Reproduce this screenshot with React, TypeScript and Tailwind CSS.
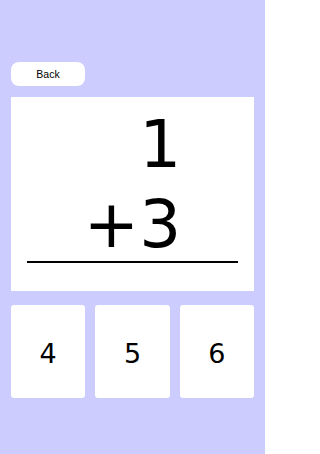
export default function App() {
  const answers = [4, 5, 6];

  return (
    <main
      className="min-h-[454px] w-[265px] bg-[#ccccff] px-[11px] pt-[62px]"
      style={{ fontFamily: '"DejaVu Sans", Verdana, sans-serif' }}
    >
      <button
        className="flex h-[24px] w-[74px] items-center justify-center rounded-[8px] bg-white pt-[1px] text-[10.5px] text-black"
        style={{ fontFamily: '"Liberation Sans", Arial, sans-serif' }}
      >
        Back
      </button>

      <div className="mt-[11px] flex h-[194px] flex-col items-center bg-white pt-[8px]">
        <div className="flex flex-col items-end text-[66px] leading-[80px] text-black">
          <span>1</span>
          <span>+3</span>
        </div>
        <div className="-mt-[4px] h-[2px] w-[211px] bg-black" />
      </div>

      <div className="mt-[14px] grid grid-cols-3 gap-[10px]">
        {answers.map((n) => (
          <button
            key={n}
            className="flex h-[93px] items-center justify-center rounded-[3px] bg-white pt-[6px] text-[27px] text-black"
          >
            {n}
          </button>
        ))}
      </div>
    </main>
  );
}
